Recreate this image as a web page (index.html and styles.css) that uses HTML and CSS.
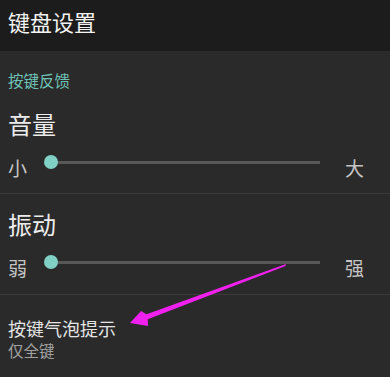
FILE: index.html
```html
<!DOCTYPE html>
<html lang="zh-CN">
<head>
<meta charset="utf-8">
<title>键盘设置</title>
<link rel="stylesheet" href="styles.css">
</head>
<body>
<div class="page">
  <header class="appbar"><h1 class="appbar-title">键盘设置</h1></header>
  <main class="content">
    <div class="category">按键反馈</div>
    <section class="pref pref-slider">
      <div class="pref-title">音量</div>
      <div class="slider-row">
        <span class="slider-label">小</span>
        <div class="track"><span class="knob"></span></div>
        <span class="slider-label slider-label-end">大</span>
      </div>
    </section>
    <section class="pref pref-slider pref-divided">
      <div class="pref-title">振动</div>
      <div class="slider-row">
        <span class="slider-label">弱</span>
        <div class="track"><span class="knob"></span></div>
        <span class="slider-label slider-label-end">强</span>
      </div>
    </section>
    <section class="pref pref-text pref-divided">
      <div class="pref-name">按键气泡提示</div>
      <div class="pref-summary">仅全键</div>
    </section>
  </main>
  <svg class="annotation" width="390" height="377" viewBox="0 0 390 377" aria-hidden="true">
    <polygon points="286,264 146.5,314.3 141,311 130,323 148,326 147.8,319.2 285.5,266" fill="#f020ee"/>
  </svg>
</div>
</body>
</html>
```
FILE: styles.css
```css
html, body {
  margin: 0;
  padding: 0;
  background: #2a2a2a;
}
body {
  font-family: "Noto Sans CJK SC", "Noto Sans", sans-serif;
  width: 390px;
  height: 377px;
  overflow: hidden;
}
.page {
  position: relative;
  width: 390px;
  height: 377px;
}
.appbar {
  height: 51px;
  background: #1c1c1c;
  padding: 10px 0 0 8px;
  box-sizing: border-box;
}
.appbar-title {
  margin: 0;
  font-size: 22px;
  line-height: 22px;
  font-weight: 400;
  color: #f2f2f2;
}
.content {
  background: #2a2a2a;
}
.category {
  padding: 22px 8px 0;
  font-size: 15.5px;
  line-height: 15px;
  color: #6fc2b6;
}
.pref-divided {
  border-top: 1px solid #3b3b3b;
}
.pref-slider {
  padding: 0 0 16px 8px;
}
.pref-slider:first-of-type .pref-title {
  margin-top: 24px;
}
.pref-divided.pref-slider {
  padding-bottom: 17px;
}
.pref-divided .pref-title {
  margin-top: 18px;
}
.pref-title {
  font-size: 24px;
  line-height: 24px;
  color: #ececec;
}
.slider-row {
  display: flex;
  align-items: flex-start;
  margin-top: 19px;
  height: 22px;
}
.slider-label {
  width: 36px;
  padding-top: 3px;
  font-size: 19px;
  line-height: 19px;
  color: #c4c4c4;
}
.slider-label-end {
  width: auto;
  margin-left: 25px;
}
.track {
  width: 276px;
  height: 14px;
  display: flex;
  align-items: center;
  background: linear-gradient(#585858, #585858) no-repeat 7px center / calc(100% - 7px) 3px;
}
.knob {
  width: 14px;
  height: 14px;
  border-radius: 50%;
  background: #80d0c5;
}
.pref-text {
  padding: 24px 8px 0;
}
.pref-name {
  font-size: 18px;
  line-height: 18px;
  color: #e4e4e4;
}
.pref-summary {
  margin-top: 6px;
  font-size: 15.5px;
  line-height: 15px;
  color: #a0a0a0;
}
.annotation {
  position: absolute;
  left: 0;
  top: 0;
  pointer-events: none;
}
```
